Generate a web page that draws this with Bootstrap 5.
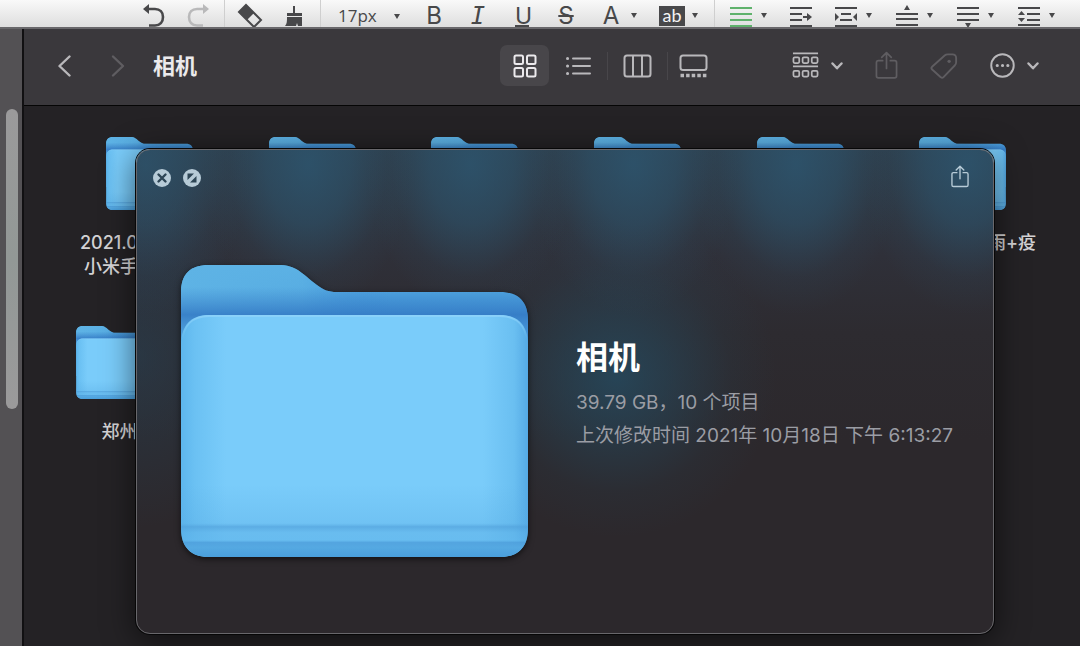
<!DOCTYPE html>
<html lang="zh-CN">
<head>
<meta charset="utf-8">
<meta name="viewport" content="width=device-width, initial-scale=1">
<title>相机</title>
<link href="https://cdn.jsdelivr.net/npm/bootstrap@5.3.0/dist/css/bootstrap.min.css" rel="stylesheet">
<style>
  body { font-family: Inter, "Noto Sans CJK SC", sans-serif; background: #242225; }
  button svg, .folder-item svg { display: block; }
  button { color: inherit; background: none; border: 0; padding: 0; }

  /* editor bar */
  .editor-bar { height: 29px; padding-left: 132px; color: #48484a; background: linear-gradient(#f9f9f9, #dedede); border-bottom: 2px solid #68676a; }
  .tool { flex: none; width: 44px; height: 32px; display: flex; align-items: center; justify-content: center; }
  .tool-split { width: 61px; padding-left: 12px; gap: 8px; justify-content: flex-start; }
  .tool-faint { color: #b9b9ba; }
  .glyph { width: 22px; font-size: 24px; line-height: 32px; text-align: center; }
  .glyph-i { font: italic 24px/32px "DejaVu Sans Mono", monospace; }
  .glyph-u { border-bottom: 2px solid; width: 14px; font-size: 23px; line-height: 22px; height: 22px; }
  .glyph-ab { flex: none; width: 26px; height: 20px; font: 18px/19px Lato, sans-serif; color: #f4f4f4; background: #48484a; margin: 0 -2px; }
  .divide { flex: none; width: 8px; height: 28px; background: linear-gradient(#cfcfcf, #cfcfcf) center / 1px 100% no-repeat; }
  .size-pick { flex: none; width: 88px; height: 32px; padding: 0 0 0 14px; border: 0; appearance: none; color: #48484a; font: 17px/32px "Open Sans", sans-serif;
    background: url("data:image/svg+xml,%3Csvg xmlns='http://www.w3.org/2000/svg' width='6' height='5'%3E%3Cpath d='M0 0h6L3 5z' fill='%2348484a'/%3E%3C/svg%3E") 70px 14px no-repeat; }

  /* page rail */
  .rail { flex: none; width: 24px; background: #535154; border-right: 2px solid #111012; padding: 80px 0 0 6px; }
  .rail-thumb { width: 12px; height: 300px; border-radius: 6px; background: linear-gradient(#9b9a9b, #929896 50%, #9b9a9b); }

  /* file browser */
  .browser-head { height: 77px; background: #3a383c; border-bottom: 1px solid #050505; color: #b9b8bb; padding: 0 41px 3px 33px; }
  .browser-title { font-size: 22px; line-height: 32px; font-weight: 700; color: #ebeaec; }
  .nav-gap { gap: 40px; }
  .view-btn { width: 49px; height: 41px; display: flex; align-items: center; justify-content: center; border-radius: 7px; }
  .view-btn.active { background: #48464a; color: #eceaed; }
  .view-btn-last { width: 41px; }
  .view-line { width: 1px; height: 28px; background: #48464a; margin: 0 5px; }
  .dimmed { color: #5f5d61; }
  .tools-right { margin-left: 78px; }
  .browser-body { background: #242225; padding: 31px 36px 0 44px; }
  .folder-item { flex: 1 1 0; min-width: 0; }
  .folder-item svg { width: 87px; height: 73px; margin: 0 auto 21px; }
  .file-name { font-size: 18px; line-height: 24px; font-weight: 500; color: #d3d2d4; white-space: nowrap; min-height: 48px; }
  .second-row { margin-top: 47px; }
  .second-row .folder-item { flex: 0 0 103px; }

  /* preview panel lying over the files */
  .preview, .preview-shadow { position: absolute; top: 43px; left: 112px; right: 86px; bottom: 12px; border-radius: 14px; }
  .preview-shadow { box-shadow: 0 6px 32px #0009, 0 0 0 1px #0a0a0b; }
  .preview { border: 1px solid #68676b; overflow: hidden;
    background:
      radial-gradient(105px 150px at 1% 3%, #2d5873b0, #2d587370 40%, #2d58731c 75%, #2d587300),
      radial-gradient(105px 150px at 20% 3%, #2d5873c0, #2d587380 40%, #2d58731c 75%, #2d587300),
      radial-gradient(105px 150px at 39% 3%, #2d5873c0, #2d587380 40%, #2d58731c 75%, #2d587300),
      radial-gradient(105px 150px at 58% 3%, #2d5873c0, #2d587380 40%, #2d58731c 75%, #2d587300),
      radial-gradient(105px 150px at 77% 3%, #2d5873c0, #2d587380 40%, #2d58731c 75%, #2d587300),
      radial-gradient(105px 150px at 97% 3%, #2d5873c0, #2d587380 40%, #2d58731c 75%, #2d587300),
      radial-gradient(160px 160px at 56% 47%, #26485ce0, #26485c88 35%, #26485c22 72%, #26485c00),
      radial-gradient(130px 170px at 0% 43%, #27435780, #27435740 50%, #27435700),
      linear-gradient(#2e3d4a, #2f3039 22%, #2d2b30 38%, #2c282c 60%); }
  .preview-head { padding: 15px 23px 0 16px; color: #b7cbd7; }
  .preview-main { padding: 77px 24px 0 44px; gap: 48px; }
  .preview-main > svg { flex: none; width: 347px; height: 292px; overflow: visible; filter: drop-shadow(0 2px 3px #0009); }
  .preview-info { padding-top: 73px; color: #9b9da4; font-size: 19px; line-height: 33px; white-space: nowrap; }
  .preview-info h1 { font-size: 32px; line-height: 40px; font-weight: 700; color: #fff; margin: 0 0 8px; }
  .preview-info p { margin: 0; }
</style>
</head>
<body>
<svg width="0" height="0" class="position-absolute" aria-hidden="true">
  <defs>
    <linearGradient id="back" x2="0" y2="1"><stop stop-color="#58aee3"/><stop offset=".2" stop-color="#4a9edb"/><stop offset=".45" stop-color="#4798d8"/></linearGradient>
    <linearGradient id="tabshine" x2="1" y2="0"><stop stop-color="#5eb3e5"/><stop offset=".35" stop-color="#5eb3e5" stop-opacity=".6"/><stop offset=".6" stop-color="#3f90d8" stop-opacity="0"/></linearGradient>
    <linearGradient id="tabfade" gradientUnits="userSpaceOnUse" x1="0" y1="22" x2="0" y2="80"><stop stop-color="#3a82ca" stop-opacity="0"/><stop offset=".48" stop-color="#3379c4" stop-opacity=".85"/><stop offset="1" stop-color="#4c9cdc" stop-opacity=".4"/></linearGradient>
    <linearGradient id="front" x2="1" y2="0"><stop stop-color="#5db6ed"/><stop offset=".04" stop-color="#6bc1f3"/><stop offset=".13" stop-color="#7accfa"/><stop offset=".87" stop-color="#7accfa"/><stop offset=".96" stop-color="#6abff1"/><stop offset="1" stop-color="#55aae5"/></linearGradient>
    <linearGradient id="frontlow" x2="0" y2="1"><stop offset=".7" stop-color="#58ace4" stop-opacity="0"/><stop offset=".86" stop-color="#58ace4" stop-opacity=".3"/><stop offset=".875" stop-color="#4f9fda" stop-opacity=".7"/><stop offset=".9" stop-color="#58ade5" stop-opacity=".5"/><stop offset=".93" stop-color="#5cb2e9" stop-opacity=".6"/><stop offset=".94" stop-color="#4d9edb" stop-opacity=".85"/><stop offset=".96" stop-color="#55a9e2"/><stop offset="1" stop-color="#4a9fdc"/></linearGradient>
    <linearGradient id="rim" gradientUnits="userSpaceOnUse" x1="0" y1="50" x2="0" y2="74"><stop stop-color="#8fd3fa" stop-opacity=".8"/><stop offset="1" stop-color="#8fd3fa" stop-opacity="0"/></linearGradient>
    <symbol id="folder" viewBox="0 0 347 292">
      <path fill="url(#back)" d="M0 28C0 9 9 0 28 0H97C116 0 120 8 136 20C143 25 147 27 156 27H319C338 27 347 37 347 55V200H0Z"/>
      <path fill="url(#tabshine)" d="M0 28C0 9 9 0 28 0H97C116 0 120 8 136 20C143 25 147 27 156 27H319C338 27 347 37 347 55V90H0Z"/>
      <path fill="url(#tabfade)" d="M0 28C0 9 9 0 28 0H97C116 0 120 8 136 20C143 25 147 27 156 27H319C338 27 347 37 347 55V90H0Z"/>
      <path fill="url(#front)" d="M0 80C0 60 10 50 28 50H319C337 50 347 60 347 80V264C347 282 337 292 319 292H28C10 292 0 282 0 264Z"/>
      <path fill="url(#frontlow)" d="M0 80C0 60 10 50 28 50H319C337 50 347 60 347 80V264C347 282 337 292 319 292H28C10 292 0 282 0 264Z"/>
      <path fill="none" stroke="url(#rim)" stroke-width="2" d="M1 78C2 60 12 51 28 51H319C335 51 345 60 346 78"/>
    </symbol>
    <symbol id="caret" viewBox="0 0 8 6"><path fill="currentColor" d="M1 0H7L4 5Z"/></symbol>
    <symbol id="down" viewBox="0 0 12 8"><path fill="none" stroke="currentColor" stroke-width="2.4" stroke-linecap="round" stroke-linejoin="round" d="M1.500 1.500 6 6.300 10.500 1.500"/></symbol>
    <symbol id="share" viewBox="0 0 24 30"><path fill="none" stroke="currentColor" stroke-width="1.8" stroke-linecap="round" stroke-linejoin="round" d="M8 10H3.500Q1.500 10 1.500 12V26Q1.500 28 3.500 28H20.500Q22.500 28 22.500 26V12Q22.500 10 20.500 10H16M12 18V2M7 6.500 12 1.500 17 6.500"/></symbol>
  </defs>
</svg>

<div class="d-flex flex-column vh-100 overflow-hidden">
  <div class="editor-bar d-flex align-items-start overflow-hidden" role="toolbar" aria-label="编辑">
    <button class="tool" aria-label="撤销"><svg width="22" height="24" viewBox="0 0 22 24"><path fill="none" stroke="currentColor" stroke-width="2.600" d="M4 5H12C17 5 20 8 20 13S17 21.500 12 21.500H6"/><path fill="currentColor" d="M0 5 6 0V10Z"/></svg></button>
    <button class="tool tool-faint" aria-label="重做"><svg width="22" height="24" viewBox="0 0 22 24"><path fill="none" stroke="currentColor" stroke-width="2.600" d="M18 5H10C5 5 2 8 2 13S5 21.500 10 21.500H16"/><path fill="currentColor" d="M22 5 16 0V10Z"/></svg></button>
    <span class="divide"></span>
    <button class="tool" aria-label="清除"><svg width="26" height="26" viewBox="0 0 26 26"><path fill="none" stroke="currentColor" stroke-width="2" d="M2 9 9 2 24 17 17 24Z"/><path fill="currentColor" d="M2 9 9 2 17 10 10 17Z"/></svg></button>
    <button class="tool" aria-label="格式刷"><svg width="20" height="22" viewBox="0 0 20 22"><path fill="currentColor" d="M9 1H11V8H18V11H3V8H9ZM3 12H18V21H14L13 18 12 21H1C3 19 3 16 3 12Z"/></svg></button>
    <span class="divide"></span>
    <select class="size-pick" aria-label="字号"><option>17px</option></select>
    <button class="tool" aria-label="粗体"><span class="glyph">B</span></button>
    <button class="tool" aria-label="斜体"><span class="glyph glyph-i">I</span></button>
    <button class="tool" aria-label="下划线"><span class="glyph glyph-u">U</span></button>
    <button class="tool" aria-label="删除线"><s class="glyph">S</s></button>
    <button class="tool tool-split" aria-label="文字颜色"><span class="glyph">A</span><svg width="8" height="6"><use href="#caret"/></svg></button>
    <button class="tool tool-split" aria-label="背景色"><span class="glyph-ab">ab</span><svg width="8" height="6"><use href="#caret"/></svg></button>
    <span class="divide"></span>
    <button class="tool tool-split" aria-label="对齐"><svg width="22" height="22" viewBox="0 0 22 22"><path stroke="#5fb26c" stroke-width="2" d="M0 3H22M0 9H22M0 15H22M0 21H22"/></svg><svg width="8" height="6"><use href="#caret"/></svg></button>
    <button class="tool" aria-label="首行缩进"><svg width="22" height="22" viewBox="0 0 22 22"><path stroke="currentColor" stroke-width="2" d="M0 3H22M0 9H12M0 15H12M0 21H22M13 12H18"/><path fill="currentColor" d="M17 8 22 12 17 16Z"/></svg></button>
    <button class="tool tool-split" aria-label="两端缩进"><svg width="22" height="22" viewBox="0 0 22 22"><path stroke="currentColor" stroke-width="2" d="M0 3H22M6 9H16M5 15H17M0 21H22"/><path fill="currentColor" d="M0 8 4 12 0 16ZM22 8 18 12 22 16Z"/></svg><svg width="8" height="6"><use href="#caret"/></svg></button>
    <button class="tool tool-split" aria-label="段前距"><svg width="22" height="22" viewBox="0 0 22 22"><path stroke="currentColor" stroke-width="2" d="M0 9H22M0 14H22M0 20H22"/><path fill="currentColor" d="M8 5 11 0 14 5Z"/></svg><svg width="8" height="6"><use href="#caret"/></svg></button>
    <button class="tool tool-split" aria-label="段后距"><svg width="22" height="24" viewBox="0 0 22 24"><path stroke="currentColor" stroke-width="2" d="M0 4H22M0 10H22M0 16H22"/><path fill="currentColor" d="M8 19 11 24 14 19Z"/></svg><svg width="8" height="6"><use href="#caret"/></svg></button>
    <button class="tool tool-split" aria-label="行间距"><svg width="22" height="22" viewBox="0 0 22 22"><path stroke="currentColor" stroke-width="2" d="M0 3H22M9 9H22M9 15H22M0 20H22"/><path fill="currentColor" d="M0 10 3.500 6 7 10ZM0 13 3.500 17 7 13Z"/></svg><svg width="8" height="6"><use href="#caret"/></svg></button>
  </div>

  <div class="d-flex flex-fill">
    <div class="rail"><div class="rail-thumb"></div></div>
    <main class="d-flex flex-column flex-fill">
      <header class="browser-head d-flex align-items-center">
        <nav class="d-flex align-items-center nav-gap">
          <button aria-label="后退"><svg width="14" height="24" viewBox="0 0 14 24"><path fill="none" stroke="currentColor" stroke-width="2.400" stroke-linecap="round" stroke-linejoin="round" d="M12.500 2.500 2.500 12 12.500 21.500"/></svg></button>
          <button class="dimmed" aria-label="前进"><svg width="14" height="24" viewBox="0 0 14 24"><path fill="none" stroke="currentColor" stroke-width="2.400" stroke-linecap="round" stroke-linejoin="round" d="M2 2.500 12 12 2 21.500"/></svg></button>
        </nav>
        <span class="browser-title ms-4 ps-1">相机</span>
        <div class="d-flex align-items-center ms-auto" role="group" aria-label="显示方式">
          <button class="view-btn active" aria-label="图标"><svg width="24" height="24" viewBox="0 0 24 24"><g fill="none" stroke="currentColor" stroke-width="2"><rect x="1.500" y="1.500" width="8.500" height="8.500" rx="1.500"/><rect x="14" y="1.500" width="8.500" height="8.500" rx="1.500"/><rect x="1.500" y="14" width="8.500" height="8.500" rx="1.500"/><rect x="14" y="14" width="8.500" height="8.500" rx="1.500"/></g></svg></button>
          <button class="view-btn ms-1" aria-label="列表"><svg width="26" height="20" viewBox="0 0 26 20"><path stroke="currentColor" stroke-width="2" stroke-linecap="round" d="M8 2.500H25M8 10H25M8 17.500H25"/><path stroke="currentColor" stroke-width="3" stroke-linecap="round" d="M2.500 2.500H2.600M2.500 10H2.600M2.500 17.500H2.600"/></svg></button>
          <span class="view-line"></span>
          <button class="view-btn" aria-label="分栏"><svg width="29" height="24" viewBox="0 0 29 24"><path fill="none" stroke="currentColor" stroke-width="2" d="M4 1.500H25Q27.500 1.500 27.500 4V20Q27.500 22.500 25 22.500H4Q1.500 22.500 1.500 20V4Q1.500 1.500 4 1.500M10 1.500V22.500M19 1.500V22.500"/></svg></button>
          <span class="view-line"></span>
          <button class="view-btn view-btn-last" aria-label="画廊"><svg width="29" height="24" viewBox="0 0 29 24"><rect x="1.500" y="1.500" width="26" height="14.500" rx="2.500" fill="none" stroke="currentColor" stroke-width="2"/><path stroke="currentColor" stroke-width="3.500" stroke-dasharray="3.500 2.100" d="M1.500 21.500H28"/></svg></button>
        </div>
        <div class="tools-right d-flex align-items-center">
          <button class="d-flex align-items-center gap-2" aria-label="分组"><svg width="27" height="27" viewBox="0 0 28 28"><g fill="none" stroke="currentColor" stroke-width="1.800"><path d="M1 1.500H27M1 15H27"/><rect x="1.500" y="5.500" width="6" height="6" rx="1.300"/><rect x="11" y="5.500" width="6" height="6" rx="1.300"/><rect x="20.500" y="5.500" width="6" height="6" rx="1.300"/><rect x="1.500" y="19.500" width="6" height="6" rx="1.300"/><rect x="11" y="19.500" width="6" height="6" rx="1.300"/><rect x="20.500" y="19.500" width="6" height="6" rx="1.300"/></g></svg><svg class="ms-1" width="12" height="8"><use href="#down"/></svg></button>
          <button class="dimmed ms-4 ps-2" aria-label="共享"><svg width="23" height="29"><use href="#share"/></svg></button>
          <button class="dimmed ms-4 ps-1" aria-label="标签"><svg class="ms-1" width="28" height="28" viewBox="0 0 30 28"><path fill="none" stroke="currentColor" stroke-width="2" stroke-linejoin="round" d="M16 2.500Q17 1.500 19 1.500H24Q28 1.500 28 5.500V10Q28 12 26.500 13.500L14.500 26Q13 27.500 11.500 26L2 17.500Q.8 16 2.500 14.500Z"/><circle cx="20.500" cy="9" r="1.800" fill="currentColor"/></svg></button>
          <button class="d-flex align-items-center gap-2 ms-4 ps-2" aria-label="更多"><svg width="25" height="25" viewBox="0 0 26 26"><circle cx="13" cy="13" r="11.700" fill="none" stroke="currentColor" stroke-width="2"/><path stroke="currentColor" stroke-width="3.200" stroke-linecap="round" d="M7.500 13H7.600M13 13H13.100M18.500 13H18.600"/></svg><svg class="ms-1" width="12" height="8"><use href="#down"/></svg></button>
        </div>
      </header>

      <section class="browser-body flex-fill position-relative overflow-hidden">
        <div class="d-flex">
          <div class="folder-item"><svg><use href="#folder"/></svg><div class="file-name"><div class="ms-2 ps-1">2021.0</div><div class="ms-3">小米手</div></div></div>
          <div class="folder-item"><svg><use href="#folder"/></svg></div>
          <div class="folder-item"><svg><use href="#folder"/></svg></div>
          <div class="folder-item"><svg><use href="#folder"/></svg></div>
          <div class="folder-item"><svg><use href="#folder"/></svg></div>
          <div class="folder-item"><svg><use href="#folder"/></svg><div class="file-name text-end pe-2">雨+疫</div></div>
        </div>
        <div class="second-row d-flex">
          <div class="folder-item"><svg><use href="#folder"/></svg><div class="file-name text-center">郑州</div></div>
        </div>

        <div class="preview-shadow"></div>
        <article class="preview">
          <div class="preview-head d-flex align-items-start">
            <button class="mt-1" aria-label="关闭"><svg width="18" height="18" viewBox="0 0 18 18"><circle cx="9" cy="9" r="9" fill="currentColor"/><path stroke="#2d4555" stroke-width="2.400" stroke-linecap="round" d="M5.500 5.500 12.500 12.500M12.500 5.500 5.500 12.500"/></svg></button>
            <button class="mt-1 ms-2 ps-1" aria-label="全屏"><svg width="18" height="18" viewBox="0 0 18 18"><circle cx="9" cy="9" r="9" fill="currentColor"/><path fill="#2d4555" d="M4.500 11V4.500H11ZM13.500 7V13.500H7Z"/></svg></button>
            <button class="ms-auto" aria-label="共享"><svg width="20" height="23"><use href="#share"/></svg></button>
          </div>
          <div class="preview-main d-flex align-items-start">
            <svg><use href="#folder"/></svg>
            <div class="preview-info">
              <h1>相机</h1>
              <p>39.79 GB，10 个项目</p>
              <p>上次修改时间 2021年 10月18日 下午 6:13:27</p>
            </div>
          </div>
        </article>
      </section>
    </main>
  </div>
</div>
<script src="https://cdn.jsdelivr.net/npm/bootstrap@5.3.0/dist/js/bootstrap.bundle.min.js"></script>
</body>
</html>
